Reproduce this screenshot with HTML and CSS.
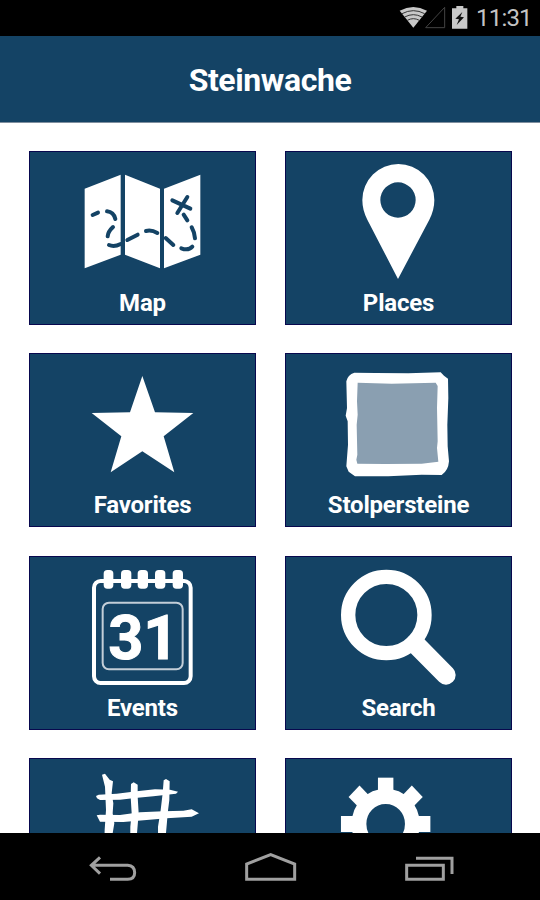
FILE: index.html
```html
<!DOCTYPE html>
<html lang="en">

<head>
  <meta charset="UTF-8">
  <meta name="viewport" content="width=device-width, initial-scale=1.0">
  <title>Steinwache</title>
  <link rel="stylesheet" href="styles.css">
</head>

<body>
  <div class="screen">

    <div class="statusbar">
      <svg class="status-icons" viewBox="0 0 216 108">
        <!-- wifi -->
        <path d="M59 32Q100 10 141 32L100 83Z" fill="#c8c8c8"/>
        <g fill="none" stroke="#333" stroke-width="3">
          <path d="M66 41Q100 23 134 41"/>
          <path d="M74 51Q100 37 126 51"/>
          <path d="M82 61Q100 51 118 61"/>
        </g>
        <!-- no signal -->
        <path d="M137 83L194 22V83Z" fill="none" stroke="#444" stroke-width="3"/>
      </svg>
      <svg class="battery" viewBox="0 0 48 72">
        <path d="M13 0H34V7H46V68H0V7H13Z" fill="#c8c8c8"/>
        <path d="M31 18L10 38L21 40L14 57L36 34L25 32Z" fill="#111"/>
      </svg>
      <span class="time">11:31</span>
    </div>

    <header class="header">
      <h1>Steinwache</h1>
    </header>

    <main class="tiles">
      <a class="tile">
        <svg viewBox="27 33 681 390">
          <path class="white" d="M194 146L302 104V344L194 385ZM315 104L420 146V385L315 344ZM432 146L541 104V344L432 385Z"/>
          <g class="route">
            <path d="M218 225L234 218"/>
            <path d="M261 214Q281 216 286 237"/>
            <path d="M279 261Q264 275 263 289"/>
            <path d="M267 315Q282 322 302 312"/>
            <path d="M322 300L353 284"/>
            <path d="M378 273Q395 269 412 279"/>
            <path d="M437 294L460 315"/>
            <path d="M484 325Q505 333 517 320"/>
            <path d="M525 295Q524 278 515 262"/>
            <path d="M502 241L491 224"/>
            <path d="M457 181L511 206M502 171L472 219"/>
          </g>
        </svg>
        <span class="label">Map</span>
      </a>

      <a class="tile">
        <svg viewBox="30 33 681 390">
          <path class="white" fill-rule="evenodd" d="M369 417L277 239Q262 210 262 180A108 108 0 0 1 478 180Q478 210 463 239ZM369 127A53 53 0 1 0 369 233A53 53 0 1 0 369 127Z"/>
        </svg>
        <span class="label">Places</span>
      </a>

      <a class="tile">
        <svg viewBox="27 25 681 390">
          <path class="white" d="M367 94L405 203L520 205L431 275L463 383L367 320L272 383L304 275L215 205L330 203Z"/>
        </svg>
        <span class="label">Favorites</span>
      </a>

      <a class="tile">
        <svg viewBox="30 25 681 390">
          <path class="white" d="M238 84L300 85L400 86L497 83L507 93L519 102L520 160L517 240L518 305L522 350Q520 378 500 391L440 390L340 395L240 395L221 381L214 365L219 300L218 230L212 213L216 190L214 110Q218 90 238 84Z"/>
          <path class="stone" d="M248 114L350 117L482 114L488 124L486 190L488 290L486 310L490 351L440 357L330 358L247 357L244 345L247 330L245 240L248 210L246 170Z"/>
        </svg>
        <span class="label">Stolpersteine</span>
      </a>

      <a class="tile">
        <svg viewBox="27 17 681 390">
          <rect class="frame" x="222" y="92" width="290" height="306" rx="20"/>
          <g class="rings">
            <rect x="251" y="59" width="29" height="56" rx="11"/>
            <rect x="303" y="59" width="31" height="56" rx="11"/>
            <rect x="353" y="59" width="31" height="56" rx="11"/>
            <rect x="405" y="59" width="31" height="56" rx="11"/>
            <rect x="458" y="59" width="31" height="56" rx="11"/>
          </g>
          <rect class="page" x="248" y="157" width="240" height="200" rx="19"/>
          <text class="day" x="370" y="326">31</text>
        </svg>
        <span class="label">Events</span>
      </a>

      <a class="tile">
        <svg viewBox="30 17 681 390">
          <circle cx="334" cy="194" r="114.500" fill="none" stroke="#fff" stroke-width="43"/>
          <path d="M420 280L513 374" stroke="#fff" stroke-width="58" stroke-linecap="round"/>
        </svg>
        <span class="label">Search</span>
      </a>

      <a class="tile">
        <svg viewBox="27 24 681 390">
          <!-- prison bars -->
          <path class="white" d="M246 74L255 71L269 89L279 94L275 130L280 160L278 190L283 220L273 280L275 400H250L254 240L258 180L255 110Z"/>
          <path class="white" d="M333 102L341 97L353 104L353 140L356 190L351 250L353 400H330L331 230L335 190L332 140Z"/>
          <path class="white" d="M431 91L438 87L449 94L448 150L443 190L441 215L437 260L438 400H415L414 230L422 180L428 130Z"/>
          <path class="white" d="M228 138L236 134L290 131L350 124L405 118L450 119L474 125L468 131L400 139L345 144L300 149L240 150L231 145Z"/>
          <path class="white" d="M230 196L240 194L300 195L360 187L430 184L490 182L515 178L537 190L515 200L440 205L380 210L310 216L240 215Z"/>
        </svg>
      </a>

      <a class="tile">
        <svg viewBox="30 24 681 390">
          <g transform="translate(332 222) scale(.965 1)">
            <circle r="83" fill="none" stroke="#fff" stroke-width="46"/>
            <g class="white">
              <path id="tooth" d="M-24 -139H24V-98H-24Z"/>
              <use href="#tooth" transform="rotate(45)"/>
              <use href="#tooth" transform="rotate(90)"/>
              <use href="#tooth" transform="rotate(135)"/>
              <use href="#tooth" transform="rotate(180)"/>
              <use href="#tooth" transform="rotate(225)"/>
              <use href="#tooth" transform="rotate(270)"/>
              <use href="#tooth" transform="rotate(315)"/>
            </g>
          </g>
        </svg>
      </a>
    </main>

    <nav class="navbar">
      <!-- back -->
      <svg viewBox="207 315 144 81">
        <path d="M240 322L214 346L240 371M214 346H323Q344 348 344 368Q344 387 323 388H270"/>
      </svg>
      <!-- home -->
      <svg class="home" viewBox="672 306 159 90">
        <path d="M680 388V342L752 314L824 342V388Z"/>
      </svg>
      <!-- recent apps -->
      <svg viewBox="387 315 153 81">
        <path d="M395 346H505V388H395ZM423 325H531V372"/>
      </svg>
    </nav>

  </div>
</body>

</html>
```

FILE: styles.css
```css
/* General Reset */
* {
  box-sizing: border-box;
}

body {
  margin: 0;
  font-family: Roboto, sans-serif;
  background: #fff;
  overflow: hidden;
}

.screen {
  display: flex;
  flex-direction: column;
  width: 540px;
  height: 900px;
}

/* Status bar */
.statusbar {
  display: flex;
  flex: none;
  height: 36px;
  padding-right: 9px;
  justify-content: flex-end;
  align-items: center;
  background: #000;
  color: #c4c4c4;
}

.status-icons {
  width: 72px;
  height: 36px;
}

.battery {
  width: 16px;
  height: 24px;
}

.time {
  width: 55px;
  margin-left: 8px;
  font-size: 24px;
  letter-spacing: -0.8px;
  line-height: 37px;
}

/* Header */
.header {
  flex: none;
  height: 87px;
  background: #144365;
  border-bottom: 1px solid #7f8f9f;
  text-align: center;
}

.header h1 {
  margin: 0;
  color: #fff;
  font-size: 32px;
  font-weight: bold;
  letter-spacing: -0.4px;
  line-height: 89px;
}

/* Tiles */
.tiles {
  display: grid;
  flex: 1;
  min-height: 0;
  grid-template-columns: 227px 227px;
  grid-auto-rows: 174px;
  gap: 28.400px 29px;
  padding: 28px 28px 0 29px;
  overflow: hidden;
}

.tile {
  display: flex;
  flex-direction: column;
  align-items: center;
  background: #144365;
  box-shadow: inset 0 0 0 1px #08084e;
}

.tile svg {
  display: block;
  flex: none;
  width: 227px;
  height: 130px;
}

.label {
  color: #fff;
  font-size: 24px;
  font-weight: bold;
  letter-spacing: -0.2px;
  line-height: 45px;
}

/* Icons */
.white {
  fill: #fff;
}

.route {
  fill: none;
  stroke: #144365;
  stroke-width: 12;
  stroke-linecap: round;
}

.stone {
  fill: #8a9fb1;
}

.frame {
  fill: none;
  stroke: #fff;
  stroke-width: 12;
}

.rings {
  fill: #fff;
}

.page {
  fill: none;
  stroke: #c3ced8;
  stroke-width: 6;
}

.day {
  fill: #fff;
  stroke: #fff;
  stroke-width: 3;
  font-size: 184px;
  font-weight: bold;
  text-anchor: middle;
}

/* Navigation bar */
.navbar {
  display: flex;
  flex: none;
  height: 67px;
  padding: 0 85px 18px 89px;
  justify-content: space-between;
  align-items: flex-end;
  background: #000;
}

.navbar svg {
  width: 48px;
  height: 27px;
  fill: none;
  stroke: #a0a0a0;
  stroke-width: 9;
}

.navbar svg:last-child {
  width: 51px;
}

.navbar .home {
  width: 53px;
  height: 30px;
}
```
